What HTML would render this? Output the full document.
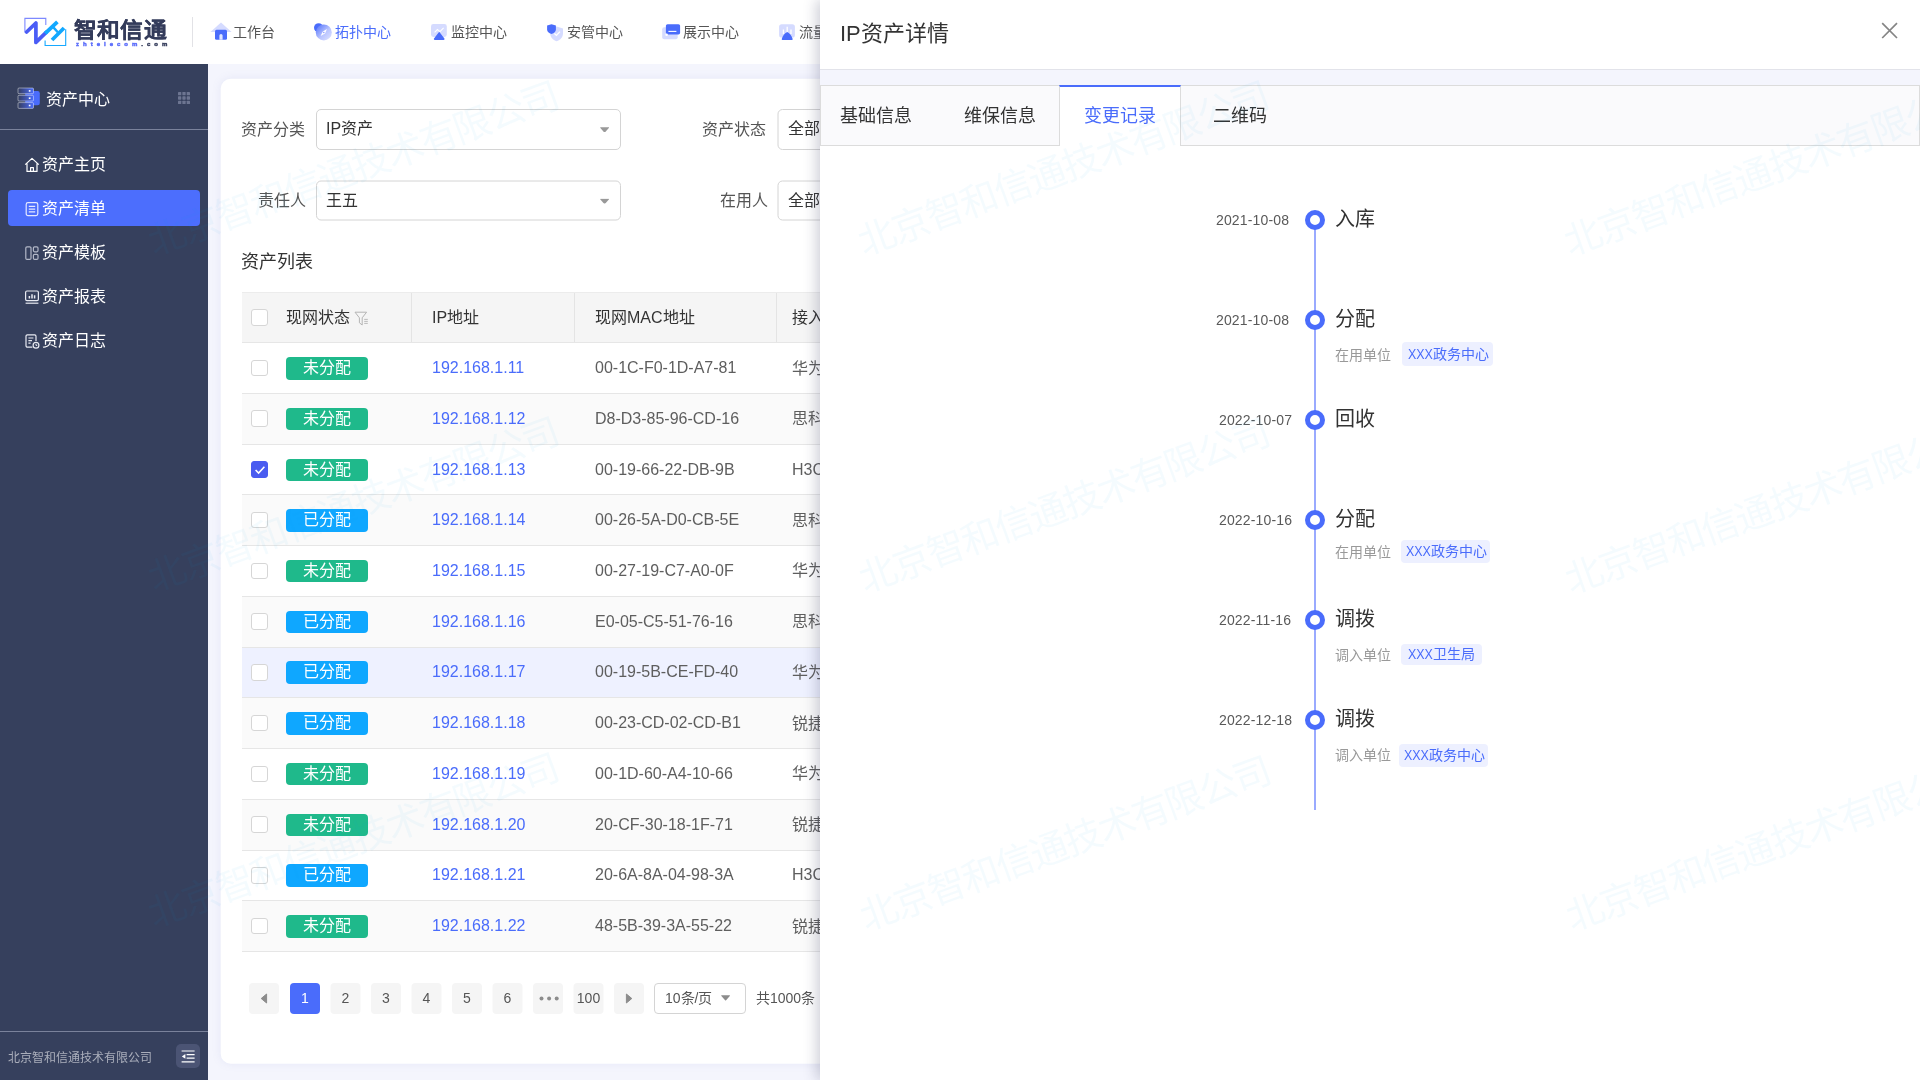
<!DOCTYPE html>
<html lang="zh-CN">
<head>
<meta charset="utf-8">
<title>IP资产详情</title>
<style>
*{box-sizing:border-box;margin:0;padding:0}
body{will-change:transform;position:relative}
html,body{width:1920px;height:1080px;overflow:hidden;background:#f4f5fd;font-family:"Liberation Sans",sans-serif;color:#333}
.abs{position:absolute}
.t{position:absolute;white-space:nowrap;line-height:1}
/* top nav */
#top{position:absolute;left:0;top:0;width:1920px;height:64px;background:#fff}
.nav{position:absolute;top:0;height:64px;font-size:14px;line-height:64px;color:#555;white-space:nowrap}
.nav.on{color:#4a6cfb}
/* sidebar */
#side{position:absolute;left:0;top:64px;width:208px;height:1016px;background:#36405d}
.mi{position:absolute;left:8px;width:192px;height:36px;border-radius:4px;color:#fff;font-size:16px;line-height:36px;white-space:nowrap}
.mi span{position:absolute;left:34px;top:1px}
.mi svg{position:absolute;left:15.7px;top:11px}
.mi.on{background:#4c6efd}
/* card */
#card{position:absolute;left:221px;top:78px;width:1500px;height:984.5px;transform:translate(-.3px,.75px);background:#fff;border-radius:10px;box-shadow:0 0 8px rgba(120,130,200,.10)}
.lbl{position:absolute;font-size:16px;line-height:40px;height:40px;color:#555;text-align:right;white-space:nowrap}
.sel{position:absolute;height:40px;border:1px solid #d4d4d4;border-radius:5px;background:#fff;font-size:16px;line-height:38px;padding-left:9px;color:#333;white-space:nowrap}
.sel i{position:absolute;right:10px;top:16px;width:0;height:0;border-left:5.5px solid transparent;border-right:5.5px solid transparent;border-top:6px solid #8a8a8a;border-radius:2px}
/* table */
#tb{position:absolute;left:242px;top:292px;width:1400px}
.tr{position:absolute;left:0;width:1400px;height:50.745px;border-bottom:1px solid #e6e6e6;background:#fff}
.tr.alt{background:#fafafa}
.tr.hl{background:#eef1ff}
.tr.hd{background:#f5f5f5;height:50.86px;border-bottom:1px solid #e6e6e6;border-top:1px solid #ececec}
.tr.hd .c{padding-bottom:3px}
.tr .c{position:absolute;top:0;height:100%;display:flex;align-items:center;font-size:16px;white-space:nowrap}
.cb{position:absolute;left:9px;top:50%;margin-top:-8.4px;width:16.5px;height:16.5px;border:1px solid #d6d6d6;border-radius:3px;background:#fff}
.cb.on{background:#4a5cf0;border-color:#4a5cf0}
.tag{position:absolute;left:44px;top:50%;margin-top:-11px;width:81.8px;height:22.5px;border-radius:4px;color:#fff;font-size:16px;line-height:22px;text-align:center}
.tag.g{background:#1fb98b}
.tag.b{background:#0fa7ff}
.ip{left:190px;color:#4a6cfb}
.mac{left:353px;color:#5e5e5e}
.vd{left:550px;color:#5e5e5e}
.vd.cj{padding-bottom:3px}
.sep{position:absolute;top:0;width:1px;height:100%;background:#e4e4e4}
/* pagination */
.pg{position:absolute;top:983px;width:30px;height:30.5px;border-radius:4px;background:#f5f5f5;color:#555;font-size:14px;line-height:30.5px;text-align:center}
.pg.on{background:#4a6cfb;color:#fff}
/* drawer */
#dr{position:absolute;left:820px;top:0;width:1100px;height:1080px;background:#fff;box-shadow:-4px 0 12px rgba(45,50,85,.22)}
#tabs{position:absolute;left:0;top:85px;width:1100px;height:61px;background:#fafafc;border:1px solid #dcdcdc}
.tab{position:absolute;top:0;height:59px;line-height:61px;font-size:18px;color:#333;white-space:nowrap}
.dot{position:absolute;left:485px;width:20px;height:20px;border-radius:50%;border:5px solid #4a6cfb;background:#fff}
.dt{position:absolute;font-size:14px;line-height:20px;color:#595959;white-space:nowrap}
.tt{position:absolute;left:515px;margin-top:.4px;font-size:20px;line-height:28px;color:#333;white-space:nowrap}
.sl{position:absolute;left:515px;font-size:14px;line-height:20px;color:#999;white-space:nowrap}
.tg{position:absolute;font-size:14px;color:#4a6cfb;background:#edf0ff;border-radius:4px;text-align:center;white-space:nowrap}
/* watermark */
.wm{position:absolute;font-size:37.8px;letter-spacing:-1.8px;line-height:44px;color:rgba(0,165,240,.044);white-space:nowrap;transform:translate(-50%,-50%) translateX(-.9px) rotate(-20.25deg);pointer-events:none}
#wml{position:absolute;left:0;top:0;width:1920px;height:1080px;overflow:hidden;pointer-events:none}
.x{display:inline-block;transform:scaleX(.89);transform-origin:0 50%;margin-right:-3.1px}
.dt{letter-spacing:.15px}
</style>
</head>
<body>
<!-- MAIN CARD -->
<div id="card"></div>
<div id="main">
<div class="lbl" style="left:204.5px;top:109.5px;width:100px">资产分类</div><div class="sel" style="left:316px;top:109px;width:305px;height:40.5px">IP资产<svg style="position:absolute;left:283px;top:16.7px" width="9.2" height="5.8" viewBox="0 0 9.2 5.8"><path d="M.7 .2H8.5Q9.4 .2 8.8 1L5.1 5.3Q4.6 5.8 4.1 5.3L.4 1Q-.2 .2 .7 .2Z" fill="#999"/></svg></div>
<div class="lbl" style="left:666.3px;top:109.5px;width:100px">资产状态</div><div class="sel" style="left:777px;top:109px;width:306px;height:40.5px;transform:translateX(.5px)">全部<svg style="position:absolute;left:283px;top:16.7px" width="9.2" height="5.8" viewBox="0 0 9.2 5.8"><path d="M.7 .2H8.5Q9.4 .2 8.8 1L5.1 5.3Q4.6 5.8 4.1 5.3L.4 1Q-.2 .2 .7 .2Z" fill="#999"/></svg></div>
<div class="lbl" style="left:205.6px;top:180.5px;width:100px">责任人</div><div class="sel" style="left:316px;top:180px;width:305px;transform:translate(0,.5px)">王五<svg style="position:absolute;left:283px;top:16.7px" width="9.2" height="5.8" viewBox="0 0 9.2 5.8"><path d="M.7 .2H8.5Q9.4 .2 8.8 1L5.1 5.3Q4.6 5.8 4.1 5.3L.4 1Q-.2 .2 .7 .2Z" fill="#999"/></svg></div>
<div class="lbl" style="left:667.5px;top:180.5px;width:100px">在用人</div><div class="sel" style="left:777px;top:180px;width:306px;transform:translate(.5px,.5px)">全部<svg style="position:absolute;left:283px;top:16.7px" width="9.2" height="5.8" viewBox="0 0 9.2 5.8"><path d="M.7 .2H8.5Q9.4 .2 8.8 1L5.1 5.3Q4.6 5.8 4.1 5.3L.4 1Q-.2 .2 .7 .2Z" fill="#999"/></svg></div>
<div class="t" style="left:240.8px;top:251px;font-size:18px;line-height:22px;color:#333">资产列表</div>
<div id="tb">
<div class="tr hd" style="top:0"><div class="cb"></div><div class="c" style="left:44px;color:#333">现网状态<svg style="margin-left:4px;margin-top:5.5px" width="15" height="15" viewBox="0 0 15 15" fill="none" stroke="#b4b4b4" stroke-width="1"><path d="M1 1.2H12.6L8.2 6.8V14L5.4 11.8V6.8Z" stroke-linejoin="round"/><path d="M10.2 8.4H13.8M10.2 10.4H13.8M10.2 12.4H13.8" stroke-width=".9"/></svg></div><div class="sep" style="left:169px"></div><div class="c" style="left:190px;color:#333">IP地址</div><div class="sep" style="left:332px"></div><div class="c" style="left:353px;color:#333">现网MAC地址</div><div class="sep" style="left:534px"></div><div class="c" style="left:550px;color:#333">接入厂商</div></div>
<div class="tr" style="top:51.16px"><div class="cb"></div><div class="tag g">未分配</div><div class="c ip">192.168.1.11</div><div class="c mac">00-1C-F0-1D-A7-81</div><div class="c vd cj">华为</div></div>
<div class="tr alt" style="top:101.91px"><div class="cb"></div><div class="tag g">未分配</div><div class="c ip">192.168.1.12</div><div class="c mac">D8-D3-85-96-CD-16</div><div class="c vd cj">思科</div></div>
<div class="tr" style="top:152.65px"><div class="cb on"><svg style="position:absolute;left:1.5px;top:2.5px" width="12" height="10" viewBox="0 0 12 10"><path d="M1.6 5L4.6 8L10.4 1.8" fill="none" stroke="#fff" stroke-width="1.6"/></svg></div><div class="tag g">未分配</div><div class="c ip">192.168.1.13</div><div class="c mac">00-19-66-22-DB-9B</div><div class="c vd">H3C</div></div>
<div class="tr alt" style="top:203.39px"><div class="cb"></div><div class="tag b">已分配</div><div class="c ip">192.168.1.14</div><div class="c mac">00-26-5A-D0-CB-5E</div><div class="c vd cj">思科</div></div>
<div class="tr" style="top:254.14px"><div class="cb"></div><div class="tag g">未分配</div><div class="c ip">192.168.1.15</div><div class="c mac">00-27-19-C7-A0-0F</div><div class="c vd cj">华为</div></div>
<div class="tr alt" style="top:304.88px"><div class="cb"></div><div class="tag b">已分配</div><div class="c ip">192.168.1.16</div><div class="c mac">E0-05-C5-51-76-16</div><div class="c vd cj">思科</div></div>
<div class="tr hl" style="top:355.63px"><div class="cb"></div><div class="tag b">已分配</div><div class="c ip">192.168.1.17</div><div class="c mac">00-19-5B-CE-FD-40</div><div class="c vd cj">华为</div></div>
<div class="tr alt" style="top:406.38px"><div class="cb"></div><div class="tag b">已分配</div><div class="c ip">192.168.1.18</div><div class="c mac">00-23-CD-02-CD-B1</div><div class="c vd cj">锐捷</div></div>
<div class="tr" style="top:457.12px"><div class="cb"></div><div class="tag g">未分配</div><div class="c ip">192.168.1.19</div><div class="c mac">00-1D-60-A4-10-66</div><div class="c vd cj">华为</div></div>
<div class="tr alt" style="top:507.87px"><div class="cb"></div><div class="tag g">未分配</div><div class="c ip">192.168.1.20</div><div class="c mac">20-CF-30-18-1F-71</div><div class="c vd cj">锐捷</div></div>
<div class="tr" style="top:558.61px"><div class="cb"></div><div class="tag b">已分配</div><div class="c ip">192.168.1.21</div><div class="c mac">20-6A-8A-04-98-3A</div><div class="c vd">H3C</div></div>
<div class="tr alt" style="top:609.35px"><div class="cb"></div><div class="tag g">未分配</div><div class="c ip">192.168.1.22</div><div class="c mac">48-5B-39-3A-55-22</div><div class="c vd cj">锐捷</div></div>
</div>
<div class="pg" style="left:249px"><svg style="position:absolute;left:11px;top:10px" width="8" height="11" viewBox="0 0 8 11"><path d="M6.6 1V10L1.2 5.5Z" fill="#8c8c8c" stroke="#8c8c8c" stroke-width="1" stroke-linejoin="round"/></svg></div>
<div class="pg on" style="left:290px">1</div>
<div class="pg" style="left:330px;transform:translateX(.5px)">2</div>
<div class="pg" style="left:371px">3</div>
<div class="pg" style="left:411px;transform:translateX(.5px)">4</div>
<div class="pg" style="left:452px">5</div>
<div class="pg" style="left:492px;transform:translateX(.5px)">6</div>
<div class="pg" style="left:533px"><svg style="position:absolute;left:5.6px;top:12.5px" width="20" height="5" viewBox="0 0 20 5" fill="#8c8c8c"><circle cx="2.5" cy="2.5" r="2"/><circle cx="10.1" cy="2.5" r="2"/><circle cx="17.7" cy="2.5" r="2"/></svg></div>
<div class="pg" style="left:573px;transform:translateX(.5px)">100</div>
<div class="pg" style="left:614px"><svg style="position:absolute;left:11px;top:10px" width="8" height="11" viewBox="0 0 8 11"><path d="M1.4 1V10L6.8 5.5Z" fill="#8c8c8c" stroke="#8c8c8c" stroke-width="1" stroke-linejoin="round"/></svg></div>
<div class="abs" style="left:654px;top:983px;width:91.5px;height:30.5px;border:1px solid #d4d4d4;border-radius:4px;font-size:14px;line-height:28.5px;padding-left:10px;color:#555;white-space:nowrap">10条/页<svg style="position:absolute;left:66.4px;top:11px" width="9.2" height="5.8" viewBox="0 0 9.2 5.8"><path d="M.7 .2H8.5Q9.4 .2 8.8 1L5.1 5.3Q4.6 5.8 4.1 5.3L.4 1Q-.2 .2 .7 .2Z" fill="#8c8c8c"/></svg></div>
<div class="t" style="left:756px;top:990px;font-size:14px;line-height:16px;color:#555">共1000条</div>
</div>
<!-- SIDEBAR -->
<div id="side">
<svg class="abs" style="left:16px;top:22px" width="26" height="24" viewBox="16 86 26 24"><defs><linearGradient id="gs" x1="0" y1="0" x2="1" y2="0"><stop offset="0" stop-color="#36405d"/><stop offset=".25" stop-color="#3a4884"/><stop offset="1" stop-color="#4a6cfb"/></linearGradient></defs><rect x="25.2" y="91" width="14.6" height="14.2" rx="2.2" fill="#4a6cfb"/><g fill="url(#gs)" stroke="rgba(255,255,255,.55)" stroke-width=".8"><rect x="18" y="88" width="15.5" height="5.7" rx="1"/><rect x="18" y="95.3" width="15.5" height="5.7" rx="1"/><rect x="18" y="102.6" width="15.5" height="5.8" rx="1"/></g><g fill="#fff"><rect x="28.8" y="90.1" width="1.7" height="1.6"/><rect x="28.8" y="97.4" width="1.7" height="1.6"/><rect x="28.8" y="104.7" width="1.7" height="1.6"/></g></svg>
<div class="t" style="left:46px;top:27px;font-size:16px;line-height:18px;color:#fff">资产中心</div>
<svg class="abs" style="left:178px;top:28px" width="12" height="12" viewBox="0 0 12 12" fill="#6d7591"><rect x="0" y="0" width="3.3" height="3.3" rx=".6"/><rect x="4.35" y="0" width="3.3" height="3.3" rx=".6"/><rect x="8.7" y="0" width="3.3" height="3.3" rx=".6"/><rect x="0" y="4.35" width="3.3" height="3.3" rx=".6"/><rect x="4.35" y="4.35" width="3.3" height="3.3" rx=".6"/><rect x="8.7" y="4.35" width="3.3" height="3.3" rx=".6"/><rect x="0" y="8.7" width="3.3" height="3.3" rx=".6"/><rect x="4.35" y="8.7" width="3.3" height="3.3" rx=".6"/><rect x="8.7" y="8.7" width="3.3" height="3.3" rx=".6"/></svg>
<div class="abs" style="left:0;top:65px;width:208px;height:1px;background:#7a829b"></div>
<div class="mi" style="top:82px"><svg width="16" height="16" viewBox="0 0 16 16" fill="none" stroke="#fff" stroke-width="1.2"><path d="M1.2 7.6L8 1.4L14.8 7.6M3 6.4V14.4H13V6.4M6.6 14.4V10.6H9.4V14.4" stroke-linejoin="round"/></svg><span>资产主页</span></div>
<div class="mi on" style="top:126px"><svg width="16" height="16" viewBox="0 0 16 16" fill="none" stroke="#e4e8ff" stroke-width="1.2"><rect x="2.2" y="1.6" width="11.6" height="13" rx="1.8"/><path d="M4.8 5.4H11.2M4.8 8.1H11.2M4.8 10.8H11.2"/></svg><span>资产清单</span></div>
<div class="mi" style="top:170px"><svg width="16" height="16" viewBox="0 0 16 16" fill="none" stroke="#b2b7c7" stroke-width="1.2"><rect x="1.8" y="1.8" width="5.2" height="12.6" rx="1.2"/><rect x="9.4" y="1.8" width="4.6" height="5" rx="1.2"/><rect x="9.4" y="9.4" width="4.6" height="5" rx="1.2"/></svg><span>资产模板</span></div>
<div class="mi" style="top:214px"><svg width="16" height="16" viewBox="0 0 16 16" fill="none" stroke="#e8eaf2" stroke-width="1.2"><rect x="1.6" y="2" width="12.8" height="9.6" rx="1.4"/><path d="M1.6 14.2H14.4"/><path d="M5.4 9.6V7M8 9.6V5.2M10.6 9.6V6.2" stroke-width="1.5"/></svg><span>资产报表</span></div>
<div class="mi" style="top:258px"><svg width="16" height="16" viewBox="0 0 16 16" fill="none" stroke="#e8eaf2" stroke-width="1.2"><path d="M8.4 14.2H3.4a1.4 1.4 0 0 1-1.4-1.4V3.2a1.4 1.4 0 0 1 1.4-1.4H10.6a1.4 1.4 0 0 1 1.4 1.4V8"/><path d="M4.4 5H9.4M4.4 7.6H8M4.4 10.2H6.6"/><circle cx="12" cy="12.2" r="2.9"/><path d="M12 10.8V12.4H13.2" stroke-width="1"/></svg><span>资产日志</span></div>
<div class="abs" style="left:0;top:967px;width:208px;height:1px;background:#7a829b"></div>
<div class="t" style="left:8px;top:986.5px;font-size:12px;line-height:14px;color:#aaaebb">北京智和信通技术有限公司</div>
<div class="abs" style="left:176px;top:980px;width:24px;height:24px;border-radius:5px;background:#4b5474"><svg class="abs" style="left:5px;top:5.5px" width="14" height="13" viewBox="0 0 14 13"><path d="M.6 1H13.6M5.6 4.6H13.6M5.6 8.2H13.6M.6 11.8H13.6" stroke="#fff" stroke-width="1.2"/><path d="M.8 6.4L4.4 4V8.8Z" fill="#fff"/></svg></div>
</div>
<!-- TOP -->
<div id="top">
<svg class="abs" style="left:22px;top:15px" width="48" height="34" viewBox="22 15 48 34">
<path d="M45.8 25V18.4H24.9V32.6" fill="none" stroke="#7d89ff" stroke-width="1.1"/>
<path d="M45.1 40.6V45.5H65.7V29.2" fill="none" stroke="#17a9ff" stroke-width="1.1"/>
<path d="M26.6 32L35.9 23V42.4L46.4 32.2" fill="none" stroke="#4a5cf6" stroke-width="3.7" stroke-linejoin="round" stroke-linecap="round"/>
<path d="M45.2 33.4L57.4 21.8" fill="none" stroke="#12a8ff" stroke-width="3.8"/>
<path d="M52 40L64 28" fill="none" stroke="#12a8ff" stroke-width="3.8"/>
<path d="M53.4 27.4L57.8 32.2" fill="none" stroke="#12a8ff" stroke-width="2.4"/>
</svg>
<div class="t" style="left:74.4px;top:18px;font-size:21px;font-weight:900;color:#343c5b;letter-spacing:.4px;line-height:24px;transform:scaleX(1.085);transform-origin:0 50%;-webkit-text-stroke:.15px #343c5b">智和信通</div>
<div class="t" style="left:76px;top:40.6px;font-size:6px;font-weight:bold;color:#5a6cfb;letter-spacing:4px;line-height:7px;-webkit-text-stroke:.45px">zhtelecom<span style="color:#343c5b">.com</span></div>
<div class="abs" style="left:192px;top:17px;width:1px;height:30px;background:#e2e2e6"></div>
<!-- nav icons -->
<svg class="abs" style="left:209px;top:21px" width="24" height="20" viewBox="209 21 24 20"><path d="M221 22.6L231.6 32H210.4Z" fill="#d5dbff"/><rect x="215" y="29.8" width="12" height="10" rx="1.5" fill="#4a6cfb"/><path d="M219.4 39.8V35.6a1.6 1.6 0 0 1 3.2 0V39.8Z" fill="#dfe4ff"/></svg>
<div class="nav" style="left:233.2px">工作台</div>
<svg class="abs" style="left:312px;top:22px" width="22" height="20" viewBox="312 22 22 20"><defs><linearGradient id="gc" x1="0" y1="0" x2="1" y2="1"><stop offset="0" stop-color="#4a6cfb"/><stop offset=".55" stop-color="#b9c4ff"/><stop offset="1" stop-color="#dfe4ff"/></linearGradient></defs><circle cx="318.6" cy="27.8" r="4.6" fill="#4a6cfb"/><circle cx="323.8" cy="32.4" r="8" fill="url(#gc)"/><path d="M327 29L325 33.6L320.6 36L322.8 31.4Z" fill="#fff"/><circle cx="323.8" cy="32.5" r=".8" fill="#8d9dff"/></svg>
<div class="nav on" style="left:335px">拓扑中心</div>
<svg class="abs" style="left:429px;top:22px" width="20" height="20" viewBox="429 22 20 20"><rect x="431" y="24" width="15.8" height="13" rx="2.4" fill="#d5dbff"/><path d="M439.2 31.8L444.4 38.6a.9.9 0 0 1-.8 1.4H434.8a.9.9 0 0 1-.8-1.4Z" fill="#4a6cfb"/><path d="M434.6 32.4L437.4 29.6L440 31.6L443.6 27.8" fill="none" stroke="#fff" stroke-width="1.1"/></svg>
<div class="nav" style="left:451px">监控中心</div>
<svg class="abs" style="left:545px;top:22px" width="20" height="20" viewBox="545 22 20 20"><path d="M556.6 26.4L563 28.4V33.4C563 37 560.4 39.8 556.6 41.2C552.8 39.8 550.2 37 550.2 33.4V28.4Z" fill="#d5dbff"/><path d="M551.5 24.3L555.9 25.6V29.6C555.9 31.6 554.2 33.2 551.5 34C548.8 33.2 547.1 31.6 547.1 29.6V25.6Z" fill="#4a6cfb"/><path d="M554.4 33.6L556.4 35.4L560 31.6" fill="none" stroke="#fff" stroke-width="1.3"/></svg>
<div class="nav" style="left:567px">安管中心</div>
<svg class="abs" style="left:660px;top:22px" width="22" height="20" viewBox="660 22 22 20"><rect x="662.2" y="27.3" width="15.5" height="12" rx="2" fill="#d5dbff"/><rect x="665.9" y="24.2" width="14.2" height="10.2" rx="1.6" fill="#4a6cfb"/><path d="M668.4 31.4H676.4" stroke="#fff" stroke-width="1.1"/><circle cx="666.6" cy="34.8" r="1.3" fill="#fff"/></svg>
<div class="nav" style="left:683px">展示中心</div>
<svg class="abs" style="left:777px;top:22px" width="20" height="20" viewBox="777 22 20 20"><rect x="779.1" y="24.2" width="15.8" height="13.3" rx="2.6" fill="#d5dbff"/><path d="M783.4 29.5V34M787.2 26.8V34M791 29.5V34" stroke="#fff" stroke-width="1.3"/><path d="M787.2 32C789.4 33 791.6 35.4 792.6 38.8a.9.9 0 0 1-.9 1.2H782.7a.9.9 0 0 1-.9-1.2C782.8 35.4 785 33 787.2 32Z" fill="#4a6cfb"/></svg>
<div class="nav" style="left:799px">流量中心</div>
</div>
<!-- DRAWER -->
<div id="dr">
<div class="t" style="left:20px;top:20px;font-size:22px;line-height:28px;color:#333">IP资产详情</div>
<svg class="abs" style="left:1061px;top:21.5px" width="17" height="17" viewBox="0 0 17 17"><path d="M1.2 1.2L16 16M16 1.2L1.2 16" stroke="#858585" stroke-width="1.7"/></svg>
<div class="abs" style="left:0;top:69px;width:1100px;height:1px;background:#e2e3ea"></div>
<div class="abs" style="left:0;top:70px;width:1100px;height:15px;background:#f4f5fd"></div>
<div id="tabs">
<div class="tab" style="left:19px">基础信息</div>
<div class="tab" style="left:143px">维保信息</div>
<div class="abs" style="left:238px;top:-1px;width:122px;height:61px;background:#fff;border-left:1px solid #dcdcdc;border-right:1px solid #dcdcdc;border-top:2px solid #4a6cfb"></div>
<div class="tab" style="left:263px;color:#4a6cfb">变更记录</div>
<div class="tab" style="left:392px">二维码</div>
</div>
<div class="abs" style="left:494px;top:220px;width:2px;height:590px;background:#9aaaff"></div>
<div class="dot" style="top:210px"></div>
<div class="dt" style="left:396px;top:210px">2021-10-08</div>
<div class="tt" style="top:205px">入库</div>
<div class="dot" style="top:310px"></div>
<div class="dt" style="left:396px;top:310px">2021-10-08</div>
<div class="tt" style="top:305px">分配</div>
<div class="sl" style="top:345px">在用单位</div>
<div class="tg" style="left:582px;top:342px;width:91px;height:24px;line-height:24px;padding-left:2.5px"><span class="x">XXX</span>政务中心</div>
<div class="dot" style="top:410px"></div>
<div class="dt" style="left:399px;top:410px">2022-10-07</div>
<div class="tt" style="top:405px">回收</div>
<div class="dot" style="top:510px"></div>
<div class="dt" style="left:399px;top:510px">2022-10-16</div>
<div class="tt" style="top:505px">分配</div>
<div class="sl" style="top:542px">在用单位</div>
<div class="tg" style="left:581px;top:540px;width:89px;height:23px;line-height:23px;padding-left:2.5px"><span class="x">XXX</span>政务中心</div>
<div class="dot" style="top:610px"></div>
<div class="dt" style="left:399px;top:610px">2022-11-16</div>
<div class="tt" style="top:605px">调拨</div>
<div class="sl" style="top:645px">调入单位</div>
<div class="tg" style="left:581px;top:644px;width:81px;height:21px;line-height:21px"><span class="x">XXX</span>卫生局</div>
<div class="dot" style="top:710px"></div>
<div class="dt" style="left:399px;top:710px">2022-12-18</div>
<div class="tt" style="top:705px">调拨</div>
<div class="sl" style="top:745px">调入单位</div>
<div class="tg" style="left:579px;top:744px;width:89px;height:23px;line-height:23px;padding-left:2.5px"><span class="x">XXX</span>政务中心</div>
</div>
<div id="wml">
<div class="wm" style="left:354.4px;top:168.7px">北京智和信通技术有限公司</div>
<div class="wm" style="left:1063.7px;top:168.9px">北京智和信通技术有限公司</div>
<div class="wm" style="left:1771.4px;top:170.1px;transform:translate(-50%,-50%) translateX(-.9px) rotate(-19.9deg)">北京智和信通技术有限公司</div>
<div class="wm" style="left:354.4px;top:505.0px">北京智和信通技术有限公司</div>
<div class="wm" style="left:1064.7px;top:506.4px">北京智和信通技术有限公司</div>
<div class="wm" style="left:1772.4px;top:507.6px;transform:translate(-50%,-50%) translateX(-.9px) rotate(-19.9deg)">北京智和信通技术有限公司</div>
<div class="wm" style="left:354.4px;top:841.3px">北京智和信通技术有限公司</div>
<div class="wm" style="left:1065.7px;top:843.9px">北京智和信通技术有限公司</div>
<div class="wm" style="left:1773.4px;top:845.1px;transform:translate(-50%,-50%) translateX(-.9px) rotate(-19.9deg)">北京智和信通技术有限公司</div>
</div>
</body>
</html>
